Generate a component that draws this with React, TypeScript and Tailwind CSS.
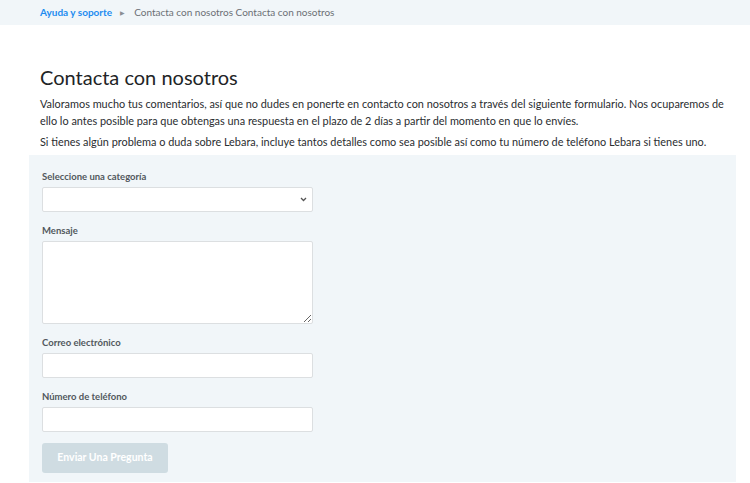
import React from 'react';

const FONT = { fontFamily: 'Lato, "Liberation Sans", sans-serif' };

const Label = ({ children }: { children: React.ReactNode }) => (
  <label className="block text-[9.5px] font-bold text-[#52585d] leading-[12px] mb-[4px]">{children}</label>
);

export default function App() {
  return (
    <div className="w-[750px] h-[483px] bg-white overflow-hidden" style={FONT}>
      {/* Breadcrumb */}
      <div className="h-[25px] bg-[#f1f6f9] flex items-center px-[40px] text-[10px]">
        <span className="font-bold text-[#1d8cf0]">Ayuda y soporte</span>
        <span className="ml-[8px] mr-[9px] text-[6px] text-[#8a8f93]">▶</span>
        <span className="text-[#6b7075]">Contacta con nosotros Contacta con nosotros</span>
      </div>

      <div className="pl-[29px] pr-[14px]">
        <div className="px-[11px] pt-[38px]">
          <h1 className="text-[20px] leading-[28px] text-[#222426]">Contacta con nosotros</h1>
          <p className="mt-[4px] text-[10.9px] leading-[17px] text-[#2a2d30]">
            Valoramos mucho tus comentarios, así que no dudes en ponerte en contacto con nosotros a través del siguiente formulario. Nos ocuparemos de ello lo antes posible para que obtengas una respuesta en el plazo de 2 días a partir del momento en que lo envíes.
          </p>
          <p className="mt-[4px] text-[10.9px] leading-[17px] text-[#2a2d30]">
            Si tienes algún problema o duda sobre Lebara, incluye tantos detalles como sea posible así como tu número de teléfono Lebara si tienes uno.
          </p>
        </div>

        {/* Form panel */}
        <form className="mt-[5px] bg-[#f1f6f9] pl-[13px] pt-[16px] pb-[9px]">
          <Label>Seleccione una categoría</Label>
          <div className="relative w-[271px]">
            <select className="appearance-none block w-full h-[25px] bg-white border border-[#dcdfe1] rounded-[2px] outline-none" />
            <svg className="absolute right-[6px] top-[10px]" width="7" height="5" viewBox="0 0 7 5">
              <path d="M1 1l2.5 2.5L6 1" fill="none" stroke="#555" strokeWidth="1.3" />
            </svg>
          </div>

          <div className="mt-[13px]">
            <Label>Mensaje</Label>
            <textarea className="block w-[271px] h-[83px] bg-white border border-[#dcdfe1] rounded-[2px] outline-none" />
          </div>

          <div className="mt-[13px]">
            <Label>Correo electrónico</Label>
            <input type="email" className="block w-[271px] h-[25px] bg-white border border-[#dcdfe1] rounded-[2px] outline-none" />
          </div>

          <div className="mt-[13px]">
            <Label>Número de teléfono</Label>
            <input type="tel" className="block w-[271px] h-[25px] bg-white border border-[#dcdfe1] rounded-[2px] outline-none" />
          </div>

          <button type="button" className="mt-[11px] w-[126px] h-[30px] bg-[#cfdce2] rounded-[3px] text-white text-[10.5px] font-bold">
            Enviar Una Pregunta
          </button>
        </form>
      </div>
    </div>
  );
}
